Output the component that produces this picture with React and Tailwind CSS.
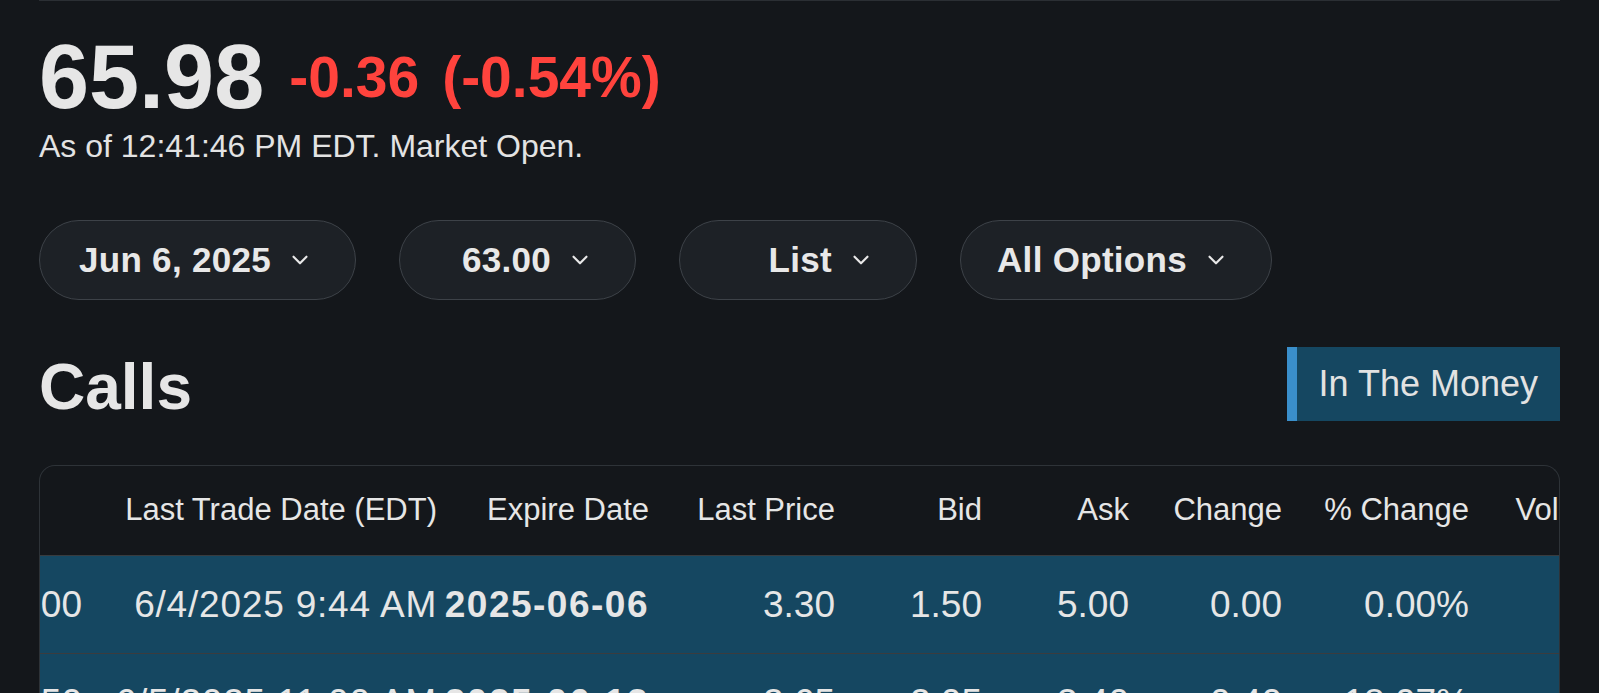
import React from "react";
import { ChevronDown } from "lucide-react";

const columns = [
  { key: "strike", label: "Strike", width: "w-[42px]" },
  { key: "lastTrade", label: "Last Trade Date (EDT)", width: "w-[355px]" },
  { key: "expire", label: "Expire Date", width: "w-[212px]" },
  { key: "lastPrice", label: "Last Price", width: "w-[186px]" },
  { key: "bid", label: "Bid", width: "w-[147px]" },
  { key: "ask", label: "Ask", width: "w-[147px]" },
  { key: "change", label: "Change", width: "w-[153px]" },
  { key: "pctChange", label: "% Change", width: "w-[187px]" },
  { key: "volume", label: "Volume", width: "w-[150px]" },
];

const rows = [
  {
    strike: "63.00",
    lastTrade: "6/4/2025 9:44 AM",
    expire: "2025-06-06",
    lastPrice: "3.30",
    bid: "1.50",
    ask: "5.00",
    change: "0.00",
    pctChange: "0.00%",
    volume: "",
  },
  {
    strike: "63.50",
    lastTrade: "6/5/2025 11:00 AM",
    expire: "2025-06-13",
    lastPrice: "2.65",
    bid: "2.05",
    ask: "3.40",
    change: "0.40",
    pctChange: "18.07%",
    volume: "",
  },
];

const filters = [
  { label: "Jun 6, 2025", width: "w-[317px]" },
  { label: "63.00", width: "w-[237px]" },
  { label: "List", width: "w-[238px]" },
  { label: "All Options", width: "w-[312px]" },
];

const App = () => {
  return (
    <div
      className="min-h-screen bg-[#14171b] px-[39px] text-[#e6e6e6]"
      style={{ fontFamily: '"Liberation Sans", Arial, sans-serif' }}
    >
      <div className="h-px bg-[#2b2f34]"></div>

      {/* Quote */}
      <div className="mt-[31px] flex items-center">
        <span className="text-[90px] font-bold leading-none">65.98</span>
        <span className="ml-[25px] text-[57px] font-bold leading-none text-[#ff433d]">
          -0.36
        </span>
        <span className="ml-[23px] text-[57px] font-bold leading-none text-[#ff433d]">
          (-0.54%)
        </span>
      </div>
      <div className="mt-[8px] text-[32px] leading-none text-[#e3e3e3]">
        As of 12:41:46 PM EDT. Market Open.
      </div>

      {/* Filters */}
      <div className="mt-[58px] flex gap-[43px]">
        {filters.map((f) => (
          <button
            key={f.label}
            className={`${f.width} flex h-[80px] items-center justify-end gap-4 rounded-full border border-[#3d4248] bg-[#1d2126] pr-[42px] text-[35px] font-bold tracking-[0.3px] text-[#e8e8e8]`}
          >
            <span>{f.label}</span>
            <ChevronDown size={26} strokeWidth={2} />
          </button>
        ))}
      </div>

      {/* Calls heading */}
      <div className="mt-[47px] flex items-center justify-between">
        <h2 className="pt-[6px] text-[64px] font-bold leading-none">Calls</h2>
        <div className="flex h-[74px] items-center border-l-[10px] border-[#3a8fcb] bg-[#154761] px-[22px] text-[36px] text-[#e2e2e2]">
          In The Money
        </div>
      </div>

      {/* Table */}
      <div className="mt-[44px] overflow-hidden rounded-t-2xl border border-b-0 border-[#2e3338]">
        <div className="flex h-[90px] items-center border-b border-[#383b3e] text-[31px] whitespace-nowrap">
          {columns.map((c) => (
            <div key={c.key} className={`${c.width} flex shrink-0 justify-end`}>
              {c.key === "strike" ? "" : c.label}
            </div>
          ))}
        </div>
        {rows.map((r, i) => (
          <div
            key={i}
            className="flex h-[98px] items-center border-b border-[#3b3c3e] bg-[#154761] text-[37px] whitespace-nowrap"
          >
            {columns.map((c) => (
              <div
                key={c.key}
                className={`${c.width} flex shrink-0 justify-end ${
                  c.key === "expire" ? "font-bold tracking-[1.5px]" : ""
                } ${c.key === "lastTrade" ? "tracking-[0.8px]" : ""}`}
              >
                {r[c.key]}
              </div>
            ))}
          </div>
        ))}
      </div>
    </div>
  );
};

export default App;
